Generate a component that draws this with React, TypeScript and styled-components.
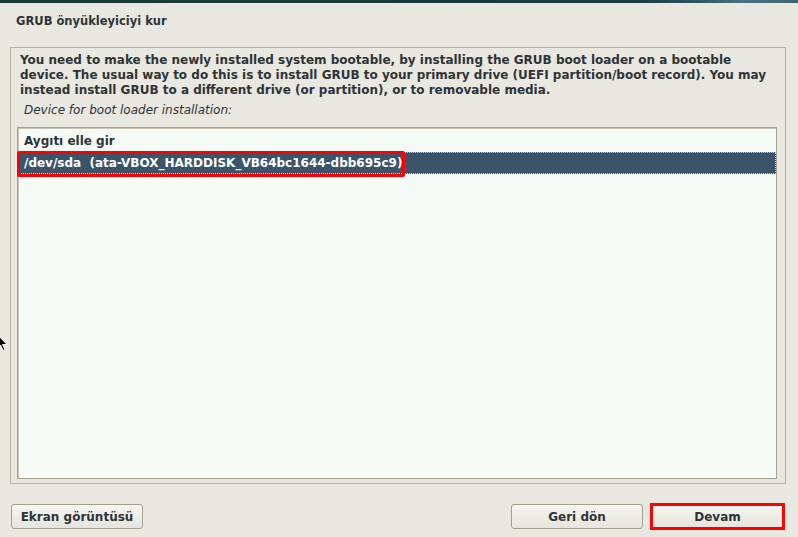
import React from "react";
import styled, { createGlobalStyle } from "styled-components";

const Global = createGlobalStyle`
  html, body { margin: 0; padding: 0; }
  body {
    background: #e8e7e0;
    font-family: "DejaVu Sans", "Noto Sans", sans-serif;
    color: #2e3436;
    overflow: hidden;
  }
`;

const Page = styled.div`
  position: relative;
  width: 798px;
  height: 537px;
  display: flex;
  flex-direction: column;
  background: #e8e7e0;
`;

const TopStrip = styled.div`
  height: 3px;
  background: linear-gradient(90deg, #183838 0%, #1c3c40 80%, #2f5a66 88%, #4a7282 93%, #3d6674 100%);
`;

const Title = styled.h1`
  margin: 0;
  padding: 11px 16px 0;
  height: 34px;
  box-sizing: border-box;
  font-size: 11.5px;
  font-weight: bold;
  line-height: 14px;
`;

const Frame = styled.section`
  margin: 10px 12px 0 10px;
  height: 437px;
  box-sizing: border-box;
  border: 1px solid #b8b2a2;
  padding: 5px 8px 4px 6px;
  display: flex;
  flex-direction: column;
`;

const Intro = styled.p`
  margin: 0 0 0 3px;
  font-size: 12px;
  font-weight: bold;
  line-height: 15px;
`;

const Label = styled.p`
  margin: 5px 0 9px 7px;
  font-size: 12px;
  font-style: italic;
  line-height: 15px;
`;

const ListBox = styled.ul`
  list-style: none;
  margin: 0;
  padding: 2px 0 0;
  flex: 1;
  background: #f6faf6;
  border: 1px solid #a8a292;
  box-shadow: inset 1px 1px 0 #c9c4b6;
`;

const Row = styled.li<{ $selected?: boolean }>`
  position: relative;
  height: 22px;
  padding: 0 6px;
  display: flex;
  align-items: center;
  font-size: 12px;
  font-weight: bold;
  color: ${(p) => (p.$selected ? "#ffffff" : "#2e3436")};
  background: ${(p) => (p.$selected ? "#3b5469" : "transparent")};
  outline: ${(p) => (p.$selected ? "1px dotted #c8d2dc" : "none")};
  outline-offset: -1px;
`;

const Highlight = styled.span`
  position: absolute;
  left: -1px;
  top: -1px;
  width: 388px;
  height: 26px;
  box-sizing: border-box;
  border: 3px solid #ff0000;
  border-radius: 2px;
`;

const Footer = styled.div`
  flex: 1;
  display: flex;
  align-items: flex-start;
  padding: 20px 13px 0 11px;
  gap: 7px;
`;

const Spacer = styled.div`
  flex: 1;
`;

const Button = styled.button<{ $marked?: boolean }>`
  width: ${(p) => (p.$marked ? "135px" : "132px")};
  height: ${(p) => (p.$marked ? "27px" : "25px")};
  box-sizing: border-box;
  margin-top: ${(p) => (p.$marked ? "-1px" : "0")};
  font-family: "DejaVu Sans", sans-serif;
  font-size: 12px;
  font-weight: bold;
  color: #2e3436;
  border: ${(p) => (p.$marked ? "3px solid #ff0000" : "1px solid #a49e8e")};
  border-radius: ${(p) => (p.$marked ? "0" : "3px")};
  background: linear-gradient(#f6f5f1, #e6e4dd);
  padding: 0;
`;

const Cursor = styled.svg`
  position: absolute;
  left: -3px;
  top: 334px;
`;

export default function App() {
  return (
    <>
      <Global />
      <Page>
        <TopStrip />
        <Title>GRUB önyükleyiciyi kur</Title>
        <Frame>
          <Intro>
            You need to make the newly installed system bootable, by installing the GRUB boot loader on a bootable
            <br />
            device. The usual way to do this is to install GRUB to your primary drive (UEFI partition/boot record). You may
            <br />
            instead install GRUB to a different drive (or partition), or to removable media.
          </Intro>
          <Label>Device for boot loader installation:</Label>
          <ListBox>
            <Row>Aygıtı elle gir</Row>
            <Row $selected>
              /dev/sda&nbsp;&nbsp;(ata-VBOX_HARDDISK_VB64bc1644-dbb695c9)
              <Highlight />
            </Row>
          </ListBox>
        </Frame>
        <Footer>
          <Button>Ekran görüntüsü</Button>
          <Spacer />
          <Button>Geri dön</Button>
          <Button $marked>Devam</Button>
        </Footer>
        <Cursor width="12" height="18" viewBox="0 0 12 18">
          <path d="M0.5 0.5 L0.5 14 L3.5 11 L6 16.5 L8 15.5 L5.5 10.5 L10 10.5 Z" fill="#000" stroke="#fff" strokeWidth="1" />
        </Cursor>
      </Page>
    </>
  );
}
